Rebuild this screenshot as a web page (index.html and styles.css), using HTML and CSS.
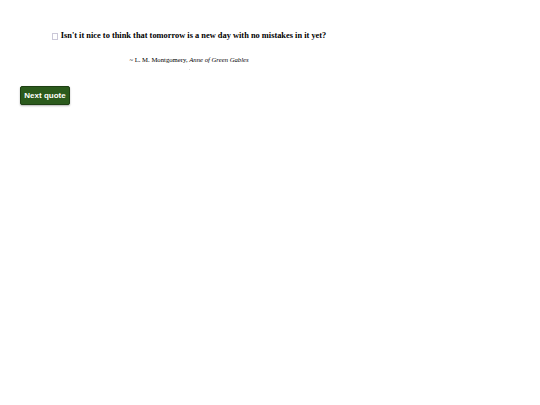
FILE: index.html
```html
<!DOCTYPE html>
<html>
<head>
<meta charset="utf-8">
<link rel="stylesheet" href="styles.css">
</head>
<body>
<div class="wrap">
  <blockquote class="quote">
    <p class="text"><span class="icon"></span>Isn't it nice to think that tomorrow is a new day with no mistakes in it yet?</p>
    <p class="cite">~ L. M. Montgomery, <i>Anne of Green Gables</i></p>
    <div class="dot"></div>
  </blockquote>
  <button class="next">Next quote</button>
</div>
</body>
</html>
```
FILE: styles.css
```css
html, body { margin: 0; padding: 0; background: #fff; }
body { font-family: "Liberation Serif", serif; color: #000; }
.wrap { padding: 8px 20px; }
.quote { margin: 22px 0 0 30px; width: 278px; display: flex; flex-direction: column; align-items: center; }
.text { margin: 0; font-weight: bold; font-size: 8.4px; line-height: 12px; white-space: nowrap; display: flex; align-items: center; gap: 3px; }
.icon { display: inline-block; width: 4px; height: 5px; border: 1px solid #cbc8d8; }
.cite { margin: 13px 0 0; font-size: 6.7px; line-height: 10px; }
.dot { width: 1px; height: 1px; background: #ddd; margin-top: 4px; }
.next { margin-top: 16px; display: block; background: #2b5a1c; color: #fff; font-family: "Liberation Sans", sans-serif; font-weight: bold; font-size: 8px; border: 1px solid #1e3f13; border-radius: 2px; height: 19px; width: 50px; padding: 0; box-shadow: 0 1px 2px rgba(0,0,0,0.3); }
```
